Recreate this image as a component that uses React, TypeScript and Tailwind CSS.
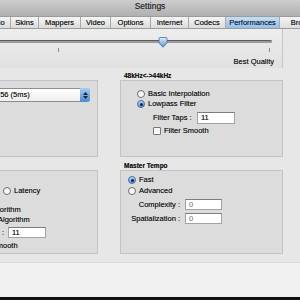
import React from 'react';

// Settings window, "Performances" tab, cropped to the visible part
function Radio({ on }: { on?: boolean }) {
  if (on) {
    return (
      <span className="inline-flex h-[8px] w-[8px] shrink-0 items-center justify-center rounded-full border border-[#3f71ad] bg-gradient-to-b from-[#b6d6f4] to-[#5e9ddf]">
        <span className="h-[3px] w-[3px] rounded-full bg-[#16222f]" />
      </span>
    );
  }
  return <span className="inline-block h-[8px] w-[8px] shrink-0 rounded-full border border-[#6f6f6f] bg-gradient-to-b from-[#f4f4f4] to-white" />;
}

function Check() {
  return <span className="inline-block h-[8px] w-[8px] shrink-0 rounded-[1px] border border-[#777] bg-gradient-to-b from-[#f2f2f2] to-white" />;
}

function Field({ value, dim, className }: { value: string; dim?: boolean; className: string }) {
  return (
    <div className={`flex items-center border border-[#a2a2a2] border-t-[#7d7d7d] bg-white pl-[3px] ${className} ${dim ? 'text-[#a4a4a4]' : 'text-[#111]'}`}>
      {value}
    </div>
  );
}

function Tab({ label, className, active }: { label: string; className: string; active?: boolean }) {
  return (
    <div
      className={`flex h-full items-center justify-center border-l border-[#a9a9a9] ${className} ${
        active ? 'bg-gradient-to-b from-[#c7def3] to-[#94c0ea] text-[#10233a]' : ''
      }`}
    >
      {label}
    </div>
  );
}

export default function App() {
  return (
    <div className="relative flex h-[300px] w-[300px] flex-col overflow-hidden bg-[#e7e7e7] font-['Liberation_Sans',Arial,sans-serif] text-[7.5px] leading-none text-[#111] [text-shadow:0_0_0.4px_rgba(0,0,0,0.5)]">
      {/* title bar */}
      <div className="flex h-[16px] shrink-0 items-start justify-center bg-gradient-to-b from-[#cdcdcd] to-[#b0b0b0] pt-[2px] text-[8.5px] text-[#2a2a2a]">
        Settings
      </div>

      {/* tab strip */}
      <div className="flex h-[13px] shrink-0 border-y border-[#9c9c9c] bg-gradient-to-b from-[#f5f5f5] to-[#dcdcdc]">
        <div className="-ml-[20px] flex h-full">
          <Tab label="Audio" className="w-[30px] border-l-0" />
          <Tab label="Skins" className="w-[28px]" />
          <Tab label="Mappers" className="w-[42px]" />
          <Tab label="Video" className="w-[30px]" />
          <Tab label="Options" className="w-[40px]" />
          <Tab label="Internet" className="w-[38px]" />
          <Tab label="Codecs" className="w-[37px]" />
          <Tab label="Performances" className="w-[54px]" active />
          <Tab label="Browser" className="w-[50px]" />
        </div>
      </div>

      {/* quality slider */}
      <div className="relative h-[39px] w-[283px] shrink-0 border-r border-[#c6c6c6] bg-gradient-to-b from-[#ededed] to-[#e1e1e1] pt-[11px]">
        <div className="relative mr-[10px] h-[3px] rounded-r-full border-t border-[#5c5c5c] bg-[#9a9a9a]">
          <svg className="absolute left-[158px] top-[-4px]" width="10" height="11" viewBox="0 0 10 11">
            <defs>
              <linearGradient id="k" x1="0" y1="0" x2="0" y2="1">
                <stop offset="0" stopColor="#e4f0fb" />
                <stop offset="1" stopColor="#4f8fd6" />
              </linearGradient>
            </defs>
            <path d="M1 1.5 Q1 0.5 2 0.5 H8 Q9 0.5 9 1.5 V6 L5 10.3 L1 6 Z" fill="url(#k)" stroke="#4a6f99" strokeWidth="0.8" />
          </svg>
        </div>
        <div className="mt-[5px] flex h-[4px] justify-between pl-[58px] pr-[12px]">
          <span className="w-px bg-[#8a8a8a]" />
          <span className="w-px bg-[#8a8a8a]" />
        </div>
        <div className="mt-[6px] pr-[8px] text-right">Best Quality</div>
      </div>

      {/* resampling + latency */}
      <div className="flex shrink-0">
        <div className="w-[98px]">
          <div className="h-[12px]" />
          <div className="h-[77px] border border-[#c3c3c3] border-l-0 bg-[#dcdcdc] pt-[7px]">
            <div className="-ml-[8px] flex h-[14px] w-[98px] items-center justify-between rounded-[3px] border border-[#8d8d8d] bg-gradient-to-b from-white to-[#eeeeee] pl-[3px]">
              <span>256 (5ms)</span>
              <span className="mr-[-1px] flex h-[14px] w-[10px] flex-col items-center justify-center gap-[1px] rounded-r-[3px] bg-gradient-to-b from-[#a8cdf1] to-[#4b8ad4]">
                <svg width="5" height="3" viewBox="0 0 5 3"><path d="M0 3 L2.5 0 L5 3 Z" fill="#13243a" /></svg>
                <svg width="5" height="3" viewBox="0 0 5 3"><path d="M0 0 L2.5 3 L5 0 Z" fill="#13243a" /></svg>
              </span>
            </div>
          </div>
        </div>
        <div className="ml-[22px] w-[163px]">
          <div className="flex h-[12px] items-end pb-[1px] pl-[4px] text-[6.5px] font-bold">48kHz&lt;-&gt;44kHz</div>
          <div className="h-[77px] border border-[#c3c3c3] bg-[#dcdcdc] pl-[16px] pt-[8px]">
            <div className="flex h-[10px] items-center gap-[3px]">
              <Radio />
              <span>Basic Interpolation</span>
            </div>
            <div className="flex h-[10px] items-center gap-[3px]">
              <Radio on />
              <span>Lowpass Filter</span>
            </div>
            <div className="ml-[16px] mt-[3px] flex h-[12px] items-center gap-[4px]">
              <span className="w-[40px]">Filter Taps :</span>
              <Field value="11" className="h-[12px] w-[38px]" />
            </div>
            <div className="ml-[16px] mt-[3px] flex h-[8px] items-center gap-[3px]">
              <Check />
              <span>Filter Smooth</span>
            </div>
          </div>
        </div>
      </div>

      {/* pitch + master tempo */}
      <div className="flex shrink-0">
        <div className="w-[98px]">
          <div className="h-[13px]" />
          <div className="h-[84px] border border-[#c3c3c3] border-l-0 bg-[#dcdcdc] pt-[15px]">
            <div className="flex h-[10px] items-center gap-[3px] pl-[3px]">
              <Radio />
              <span>Latency</span>
            </div>
            <div className="-ml-[42px] mt-[9px] flex h-[10px] items-center gap-[3px]">
              <Radio />
              <span>Basic Algorithm</span>
            </div>
            <div className="-ml-[48px] flex h-[10px] items-center gap-[3px]">
              <Radio on />
              <span>Advanced Algorithm</span>
            </div>
            <div className="-ml-[40px] mt-[2px] flex h-[11px] items-center gap-[4px]">
              <span className="w-[44px] text-right">Filter Taps :</span>
              <Field value="11" className="h-[11px] w-[38px]" />
            </div>
            <div className="-ml-[38px] mt-[4px] flex h-[8px] items-center gap-[3px]">
              <Check />
              <span>Filter Smooth</span>
            </div>
          </div>
        </div>
        <div className="ml-[22px] w-[163px]">
          <div className="flex h-[13px] items-end pb-[1px] pl-[4px] text-[6.5px] font-bold">Master Tempo</div>
          <div className="h-[84px] border border-[#c3c3c3] bg-[#dcdcdc] pl-[7px] pt-[4px]">
            <div className="flex h-[10px] items-center gap-[3px]">
              <Radio on />
              <span>Fast</span>
            </div>
            <div className="mt-[1px] flex h-[10px] items-center gap-[3px]">
              <Radio />
              <span>Advanced</span>
            </div>
            <div className="-ml-[7px] mt-[3px] flex h-[11px] items-center gap-[5px]">
              <span className="w-[59px] text-right">Complexity :</span>
              <Field value="0" dim className="h-[11px] w-[37px]" />
            </div>
            <div className="-ml-[7px] mt-[3px] flex h-[11px] items-center gap-[5px]">
              <span className="w-[59px] text-right">Spatialization :</span>
              <Field value="0" dim className="h-[11px] w-[37px]" />
            </div>
          </div>
        </div>
      </div>

      {/* footer */}
      <div className="flex flex-1 flex-col">
        <div className="h-[8px]" />
        <div className="flex-1 border-t border-[#dadada] bg-[#f0f0f0]" />
        <div className="h-[3px] bg-[#111]" />
      </div>
    </div>
  );
}
